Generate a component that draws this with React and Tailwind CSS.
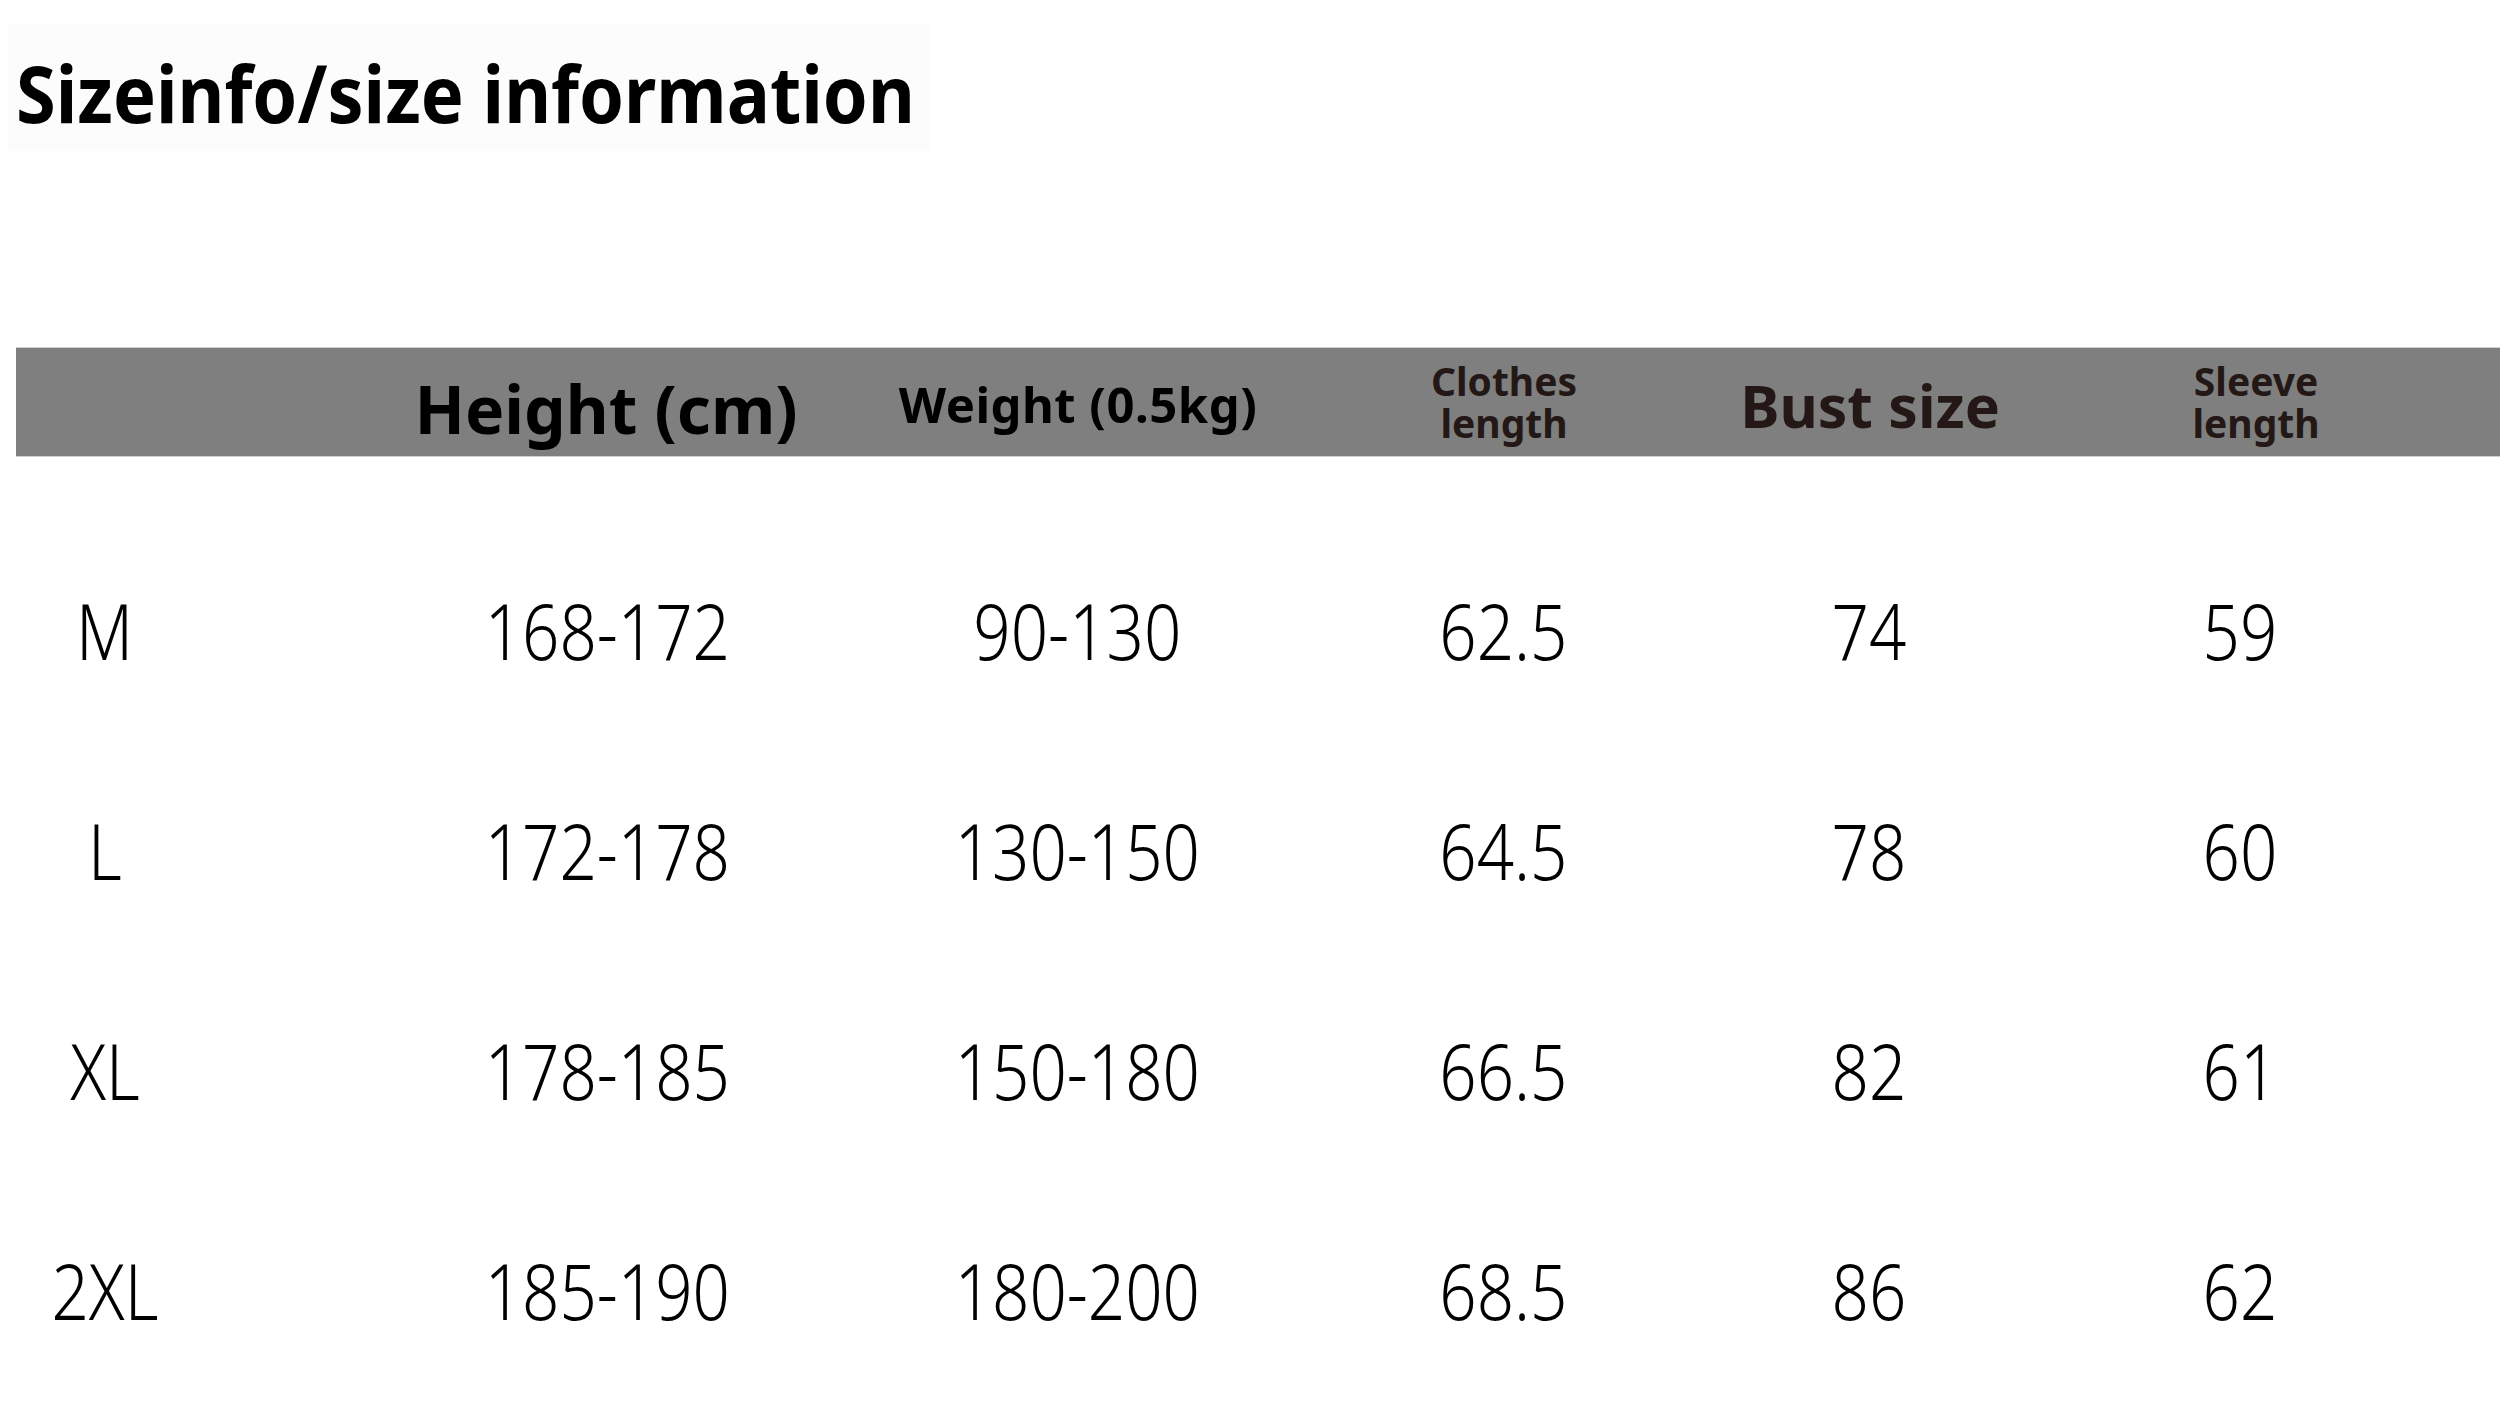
import React from 'react';

const cols = [
  'w-[180px]',
  'ml-[232px] w-[360px]',
  'ml-[110px] w-[360px]',
  'ml-[66px] w-[360px]',
  'ml-[6px] w-[360px]',
  'ml-[21px] w-[360px]',
];

// small per-column nudges for the value cells
const valueShift = ['', '', '', '', '', '-translate-x-[10px]'];

const rows = [
  ['M', '168-172', '90-130', '62.5', '74', '59'],
  ['L', '172-178', '130-150', '64.5', '78', '60'],
  ['XL', '178-185', '150-180', '66.5', '82', '61'],
  ['2XL', '185-190', '180-200', '68.5', '86', '62'],
];

const SizeChart = () => {
  return (
    <div className="w-[2500px] h-[1406px] bg-white overflow-hidden font-['Noto_Sans',sans-serif]">
      {/* Title */}
      <div className="pt-[24px] pl-[8px]">
        <div className="w-[922px] h-[127px] bg-[#fcfcfc] flex items-center pl-[8px] pt-[10px]">
          <h1 className="text-[78px] leading-none font-bold text-black origin-left scale-x-[0.925] whitespace-nowrap">
            Sizeinfo/size information
          </h1>
        </div>
      </div>

      {/* Header bar */}
      <div className="mt-[196px] ml-[16px] h-[110px] bg-[#7f7f7f] border-y border-[#cfcfcf] flex items-center">
        <div className={`${cols[0]} shrink-0`} />
        <div className={`${cols[1]} shrink-0 flex justify-center pt-[12px] -translate-x-[2px]`}>
          <span className="text-[66px] leading-none font-bold text-black whitespace-nowrap">Height (cm)</span>
        </div>
        <div className={`${cols[2]} shrink-0 flex justify-center pt-[4px]`}>
          <span className="text-[49px] leading-none font-bold text-black whitespace-nowrap tracking-[0.5px]">
            Weight (0.5kg)
          </span>
        </div>
        <div className={`${cols[3]} shrink-0 text-center text-[39px] leading-[42px] font-bold text-[#231815]`}>
          Clothes
          <br />
          length
        </div>
        <div className={`${cols[4]} shrink-0 flex justify-center pt-[6px]`}>
          <span className="text-[59px] leading-none font-bold text-[#231815] whitespace-nowrap">Bust size</span>
        </div>
        <div className={`${cols[5]} shrink-0 text-center text-[39px] leading-[42px] font-bold text-[#231815] translate-x-[5px]`}>
          Sleeve
          <br />
          length
        </div>
      </div>

      {/* Rows */}
      <div className="mt-[63px] ml-[15px]">
        {rows.map((row) => (
          <div key={row[0]} className="h-[220px] flex items-center">
            {row.map((cell, i) => (
              <div
                key={i}
                className={`${cols[i]} ${valueShift[i]} shrink-0 flex justify-center text-[77px] leading-none font-light text-black`}
              >
                <span className="scale-x-[0.85] whitespace-nowrap">{cell}</span>
              </div>
            ))}
          </div>
        ))}
      </div>
    </div>
  );
};

export default function App() {
  return <SizeChart />;
}
